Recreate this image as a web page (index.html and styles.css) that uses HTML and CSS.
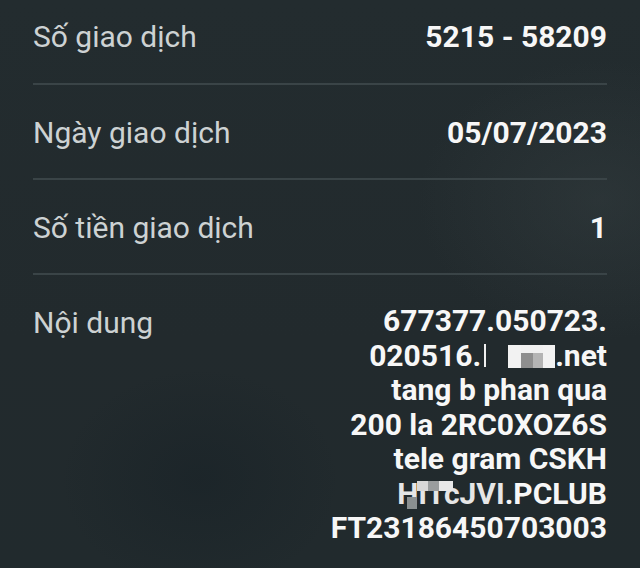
FILE: index.html
```html
<!DOCTYPE html>
<html lang="vi">
<head>
<meta charset="utf-8">
<title>Chi tiết giao dịch</title>
<link rel="stylesheet" href="styles.css">
</head>
<body>
<main class="list">
  <div class="row">
    <div class="label">Số giao dịch</div>
    <div class="value">5215 - 58209</div>
  </div>
  <div class="row">
    <div class="label">Ngày giao dịch</div>
    <div class="value">05/07/2023</div>
  </div>
  <div class="row">
    <div class="label">Số tiền giao dịch</div>
    <div class="value">1</div>
  </div>
  <div class="row row-multi">
    <div class="label">Nội dung</div>
    <div class="value multi">
      <div>677377.050723.</div>
      <div>020516.<span class="bar"></span><span class="mosaic m1"></span>.net</div>
      <div>tang b phan qua</div>
      <div>200 la 2RC0XOZ6S</div>
      <div>tele gram CSKH</div>
      <div><span class="masked">HITcJVI</span>.PCLUB</div>
      <div>FT23186450703003</div>
    </div>
  </div>
</main>
</body>
</html>
```

FILE: styles.css
```css
html, body {
  margin: 0;
  padding: 0;
}
body {
  width: 640px;
  height: 568px;
  overflow: hidden;
  background:
    radial-gradient(ellipse 260px 200px at 600px 200px, rgba(60,70,72,0.35), rgba(60,70,72,0) 70%),
    radial-gradient(ellipse 200px 160px at 200px 480px, rgba(20,30,36,0.4), rgba(20,30,36,0) 70%),
    linear-gradient(180deg, #232c2f 0%, #222a2d 60%, #212a2d 100%);
  font-family: Roboto, "Noto Sans", sans-serif;
}
.list {
  padding: 0 33px;
}
.row {
  display: flex;
  justify-content: space-between;
  align-items: flex-start;
  padding: 31px 0 28px;
  border-bottom: 2px solid #3a4447;
}
.row:first-child {
  padding-top: 20px;
  padding-bottom: 29px;
}
.row-multi {
  border-bottom: none;
}
.label {
  font-size: 30px;
  line-height: 34px;
  color: #cdd2d3;
  font-weight: 400;
}
.value {
  font-size: 30px;
  line-height: 34px;
  color: #f7f7f7;
  font-weight: 700;
  text-align: right;
}
.multi {
  line-height: 34.5px;
  margin-top: -2px;
}
.bar {
  display: inline-block;
  width: 2px;
  height: 23px;
  background: #f0f0f0;
  margin: 0 22px 0 3px;
  vertical-align: -1px;
}
.mosaic {
  display: inline-block;
  vertical-align: -2px;
}
.m1 {
  width: 47px;
  height: 23px;
  background:
    linear-gradient(#f2f2f2, #f2f2f2) 0 0 / 13px 23px no-repeat,
    linear-gradient(#f2f2f2, #f2f2f2) 35px 0 / 12px 23px no-repeat,
    linear-gradient(#f0f0f0, #f0f0f0) 13px 0 / 22px 8px no-repeat,
    linear-gradient(#8e8e8e, #8e8e8e) 13px 8px / 12px 15px no-repeat,
    linear-gradient(#b4b4b4, #b4b4b4) 25px 8px / 10px 15px no-repeat;
}
.masked {
  position: relative;
  display: inline-block;
  color: #e6e6e6;
}
.masked::before {
  content: "";
  position: absolute;
  left: 10px;
  top: 20px;
  width: 10px;
  height: 12px;
  background: #8a8f90;
}
.masked::after {
  content: "";
  position: absolute;
  left: 20px;
  top: 4px;
  width: 36px;
  height: 10px;
  background: linear-gradient(90deg, #d8d8d8 0 30%, #9a9d9e 30% 60%, #e8e8e8 60% 100%);
}
```
